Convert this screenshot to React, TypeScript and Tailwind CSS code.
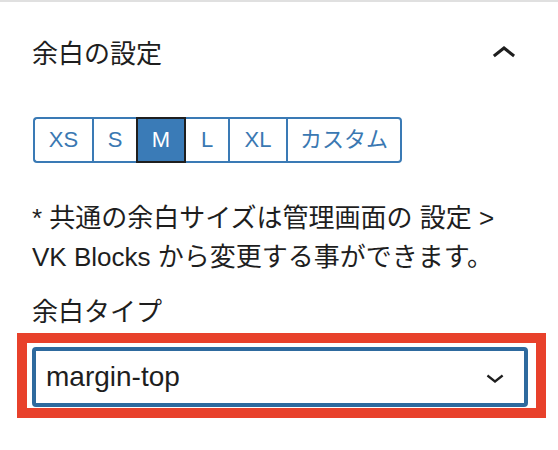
const sizes = [
  { label: 'XS', w: 'w-[59px]' },
  { label: 'S', w: 'w-[44px]' },
  { label: 'M', w: 'w-[50px]' },
  { label: 'L', w: 'w-[42px]' },
  { label: 'XL', w: 'w-[58px]' },
  { label: 'カスタム', w: 'w-[116px]' },
];

export default function App() {
  const selected = 'M';

  return (
    <div className="w-[558px] h-[450px] bg-white border-t-2 border-[#e0e0e0] text-[#1e1e1e] font-['Liberation_Sans','Noto_Sans_CJK_JP',sans-serif]">
      {/* パネル見出し */}
      <div className="flex items-center justify-between pl-[32px] pr-[30px] pt-[28px]">
        <h2 className="text-[26px] leading-[39px] font-normal">余白の設定</h2>
        <svg width="48" height="48" viewBox="0 0 24 24" fill="#1e1e1e">
          <path d="M6.5 12.4L12 8l5.5 4.4-.9 1.2L12 10l-4.6 3.6-1-1.2z" />
        </svg>
      </div>

      {/* サイズ切替 */}
      <div className="flex mt-[39px] ml-[33px] h-[46px]">
        {sizes.map((s, i) => {
          const isSel = s.label === selected;
          const afterSel = i > 0 && sizes[i - 1].label === selected;
          const isFirst = i === 0;
          const isLast = i === sizes.length - 1;
          return (
            <button
              key={s.label}
              className={[
                s.w,
                'h-full flex items-center justify-center text-[22px] leading-none',
                isSel
                  ? 'border-2 border-[#1e1e1e] bg-[#3a7bb7] text-white'
                  : 'border-y-2 border-[#3a7ab5] text-[#3a78b2] bg-white',
                !isSel && !afterSel ? 'border-l-2' : '',
                isLast ? 'border-r-2 rounded-r-[4px]' : '',
                isFirst ? 'rounded-l-[4px]' : '',
              ].join(' ')}
            >
              {s.label}
            </button>
          );
        })}
      </div>

      <p className="mt-[36px] px-[32px] text-[26px] leading-[39px]">
        * 共通の余白サイズは管理画面の 設定 &gt;
        <br />
        VK Blocks から変更する事ができます。
      </p>

      <div className="mt-[16px] px-[32px] text-[26px] leading-[39px]">余白タイプ</div>

      {/* 強調枠 */}
      <div className="mt-[1px] ml-[17px] w-[529px] h-[85px] border-[10px] border-[#e8412b] pt-[4px] pl-[5px]">
        <div className="w-[496px] h-[60px] border-[4px] border-[#2e6a9e] rounded-[4px] flex items-center justify-between pl-[10px] pr-[11px]">
          <span className="text-[28px] leading-none font-['Liberation_Sans',sans-serif]">margin-top</span>
          <svg width="36" height="36" viewBox="0 0 24 24" fill="#1e1e1e">
            <path d="M17.5 11.6L12 16l-5.5-4.4.9-1.2L12 14l4.6-3.6 1 1.2z" />
          </svg>
        </div>
      </div>
    </div>
  );
}
